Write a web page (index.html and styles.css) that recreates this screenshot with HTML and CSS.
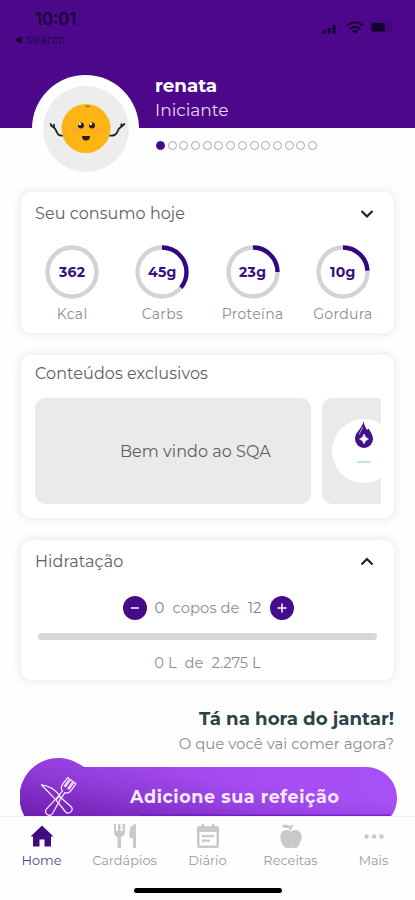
FILE: index.html
```html
<!DOCTYPE html>
<html lang="pt-BR">
<head>
<meta charset="utf-8">
<meta name="viewport" content="width=device-width, initial-scale=1">
<title>Home</title>
<link rel="stylesheet" href="styles.css">
</head>
<body>
<div class="app">
  <header class="header">
    <div class="status">
      <div class="status-left">
        <div class="clock">10:01</div>
        <div class="back"><svg width="8" height="8" viewBox="0 0 8 8"><path d="M0 4 7.500.5v7z"/></svg><span>Search</span></div>
      </div>
      <svg class="status-icons" width="76" height="16" viewBox="0 0 76 16">
        <path d="M-8.500 10h3v3.500h-3zM-3.500 8h3v5.500h-3zM1.500 5h3v8.500h-3z"/>
        <path d="M6.500 2.500h3v11h-3z" opacity=".08"/>
        <path d="M16 5.500q8-6.500 16 0M19 9q5-4 10 0" fill="none" stroke="#12032d" stroke-width="2"/>
        <path d="M21 11q3-2 6 0l-3 2.500z"/>
        <rect x="39" y="1" width="22" height="12" rx="3.500" opacity=".12"/>
        <rect x="40.500" y="3" width="13.500" height="8.500" rx="1.500"/>
        <path d="M63 5q2 2 0 4z" opacity=".2"/>
      </svg>
    </div>
    <div class="profile">
      <div class="avatar">
        <svg width="86" height="86" viewBox="0 0 86 86">
          <circle cx="43" cy="43" r="43" fill="#ededee"/>
          <g fill="none" stroke="#222" stroke-width="1.700" stroke-linecap="round" stroke-linejoin="round">
            <path d="M20 49.500q-5 .5-6-3l-2-4-4-3M9.500 40.500 7.500 38M11 41V38.500M66 49.500q6 1 8-3l2-4 4-3M78 41l.5-3M79 40l2.500-2"/>
          </g>
          <circle cx="43" cy="42.500" r="24.500" fill="#fdb515"/>
          <path d="M24 28a24.500 24.500 0 0 0 11 37.500Q22 49 24 28z" fill="#f3a51b" opacity=".35"/>
          <path d="M42.500 20.500h4" stroke="#a66c15" stroke-width="1.500"/>
          <ellipse cx="32.500" cy="45" rx="4" ry="2.500" fill="#ff9b50" opacity=".6"/>
          <ellipse cx="55" cy="45" rx="4" ry="2.500" fill="#ff9b50" opacity=".6"/>
          <circle cx="38" cy="39.500" r="3" fill="#322014"/><circle cx="49" cy="39.500" r="3" fill="#322014"/>
          <circle cx="36.800" cy="38" r="1.300" fill="#fff"/><circle cx="47.800" cy="38" r="1.300" fill="#fff"/>
          <path d="M39 50h8q0 4.500-4 4.500T39 50z" fill="#3c1714"/>
        </svg>
      </div>
      <div class="who">
        <div class="name">renata</div>
        <div class="level">Iniciante</div>
        <div class="dots"><i class="on"></i><i></i><i></i><i></i><i></i><i></i><i></i><i></i><i></i><i></i><i></i><i></i><i></i><i></i></div>
      </div>
    </div>
  </header>

  <main class="main">
    <section class="card intake">
      <div class="card-head"><h2>Seu consumo hoje</h2>
        <svg width="14" height="10" viewBox="0 0 14 10"><path d="M1.500 2 7 7.500 12.500 2"/></svg></div>
      <div class="rings">
        <div class="ring"><div class="dial"><svg viewBox="0 0 54 54"><circle cx="27" cy="27" r="24.500"/></svg><b>362</b></div><span>Kcal</span></div>
        <div class="ring"><div class="dial"><svg viewBox="0 0 54 54"><circle cx="27" cy="27" r="24.500"/><circle class="arc" cx="27" cy="27" r="24.500" pathLength="100" stroke-dasharray="36 100"/></svg><b>45g</b></div><span>Carbs</span></div>
        <div class="ring"><div class="dial"><svg viewBox="0 0 54 54"><circle cx="27" cy="27" r="24.500"/><circle class="arc" cx="27" cy="27" r="24.500" pathLength="100" stroke-dasharray="25 100"/></svg><b>23g</b></div><span>Proteína</span></div>
        <div class="ring"><div class="dial"><svg viewBox="0 0 54 54"><circle cx="27" cy="27" r="24.500"/><circle class="arc" cx="27" cy="27" r="24.500" pathLength="100" stroke-dasharray="24 100"/></svg><b>10g</b></div><span>Gordura</span></div>
      </div>
    </section>

    <section class="card content">
      <div class="card-head"><h2>Conteúdos exclusivos</h2></div>
      <div class="carousel">
        <div class="slide">Bem vindo ao SQA</div>
        <div class="slide next">
          <div class="disc">
            <svg width="18" height="27" viewBox="0 0 18 27"><path d="M8.500 0c.5 4 2 6 3.500 9l1.500-1.500C15.500 11 18 14 18 18a9 9 0 0 1-18 0c0-3.500 1.500-6 4-9C6 6.500 8 4 8.500 0z" fill="#43108c"/><path d="M7.500 6c0 3-3 4-3 7.500" fill="none" stroke="#bca4dc" stroke-width="1"/><path d="M9 13q1 4 4.500 5-3.500 1-4.500 5-1-4-4.500-5 3.500-1 4.500-5z" fill="#fff" stroke="#fff" stroke-width=".6"/></svg>
            <div class="tagline"></div>
          </div>
        </div>
      </div>
    </section>

    <section class="card water">
      <div class="card-head"><h2>Hidratação</h2>
        <svg width="14" height="10" viewBox="0 0 14 10"><path d="M1.500 7.500 7 2l5.500 5.500"/></svg></div>
      <div class="stepper">
        <button aria-label="Menos"><svg width="24" height="24" viewBox="0 0 24 24"><path d="M8 12h8"/></svg></button>
        <p><em>0</em> <span>copos de</span> <em>12</em></p>
        <button aria-label="Mais"><svg width="24" height="24" viewBox="0 0 24 24"><path d="M7.500 12h9M12 7.500v9"/></svg></button>
      </div>
      <div class="bar"></div>
      <p class="litres"><span>0 L</span><span>de</span><span>2.275 L</span></p>
    </section>

    <section class="meal">
      <h3>Tá na hora do jantar!</h3>
      <p>O que você vai comer agora?</p>
      <div class="cta">
        <svg width="377" height="58" viewBox="0 0 377 58">
          <defs>
            <linearGradient id="body" x1="0" y1="0" x2="1" y2="0"><stop offset="0" stop-color="#953edd"/><stop offset=".6" stop-color="#a54df2"/><stop offset="1" stop-color="#a750f6"/></linearGradient>
            <linearGradient id="shade" gradientUnits="userSpaceOnUse" x1="60" y1="2" x2="52" y2="62"><stop offset="0" stop-color="#5d109d" stop-opacity="0"/><stop offset=".35" stop-color="#5d109d" stop-opacity=".15"/><stop offset="1" stop-color="#5d109d" stop-opacity=".68"/></linearGradient>
            <linearGradient id="edge" x1="0" y1="0" x2="0" y2="1"><stop offset="0" stop-color="#6a0fc4" stop-opacity="0"/><stop offset="1" stop-color="#6a0fc4" stop-opacity=".85"/></linearGradient>
          </defs>
          <path d="M38.500 0C49 0 56 4 64 9H346A31 31 0 0 1 370.500 59H5A39 39 0 0 1 38.500 0z" fill="url(#body)"/>
          <path d="M38.500 0C49 0 56 4 64 9H346A31 31 0 0 1 370.500 59H5A39 39 0 0 1 38.500 0z" fill="url(#shade)"/>
          <path d="M120 55.500H368L371 58H120z" fill="url(#edge)"/>
          <g fill="none" stroke="#f7eaff" stroke-width="1.300" stroke-linejoin="round" stroke-linecap="round">
            <g transform="translate(37 39.500) rotate(-44) scale(.95)"><path d="M-2.500-21Q5-12 3.500 1H-2.500zM-2.500 1 2.500 1 4 17Q4 21 0 21T-4 17z"/></g>
            <g transform="translate(39.500 39.500) rotate(36) scale(.95)"><path d="M-5.500-22v9q0 4.500 4 5.500L-2 2-4 18q0 4 4 4t4-4L2 2 1.500-7.500q4-1 4-5.500v-9M-3-22v9h1.500v-9h3v9H3v-9M-5.500-22H-3M3-22H5.500"/></g>
          </g>
        </svg>
        <span>Adicione sua refeição</span>
      </div>
    </section>
  </main>

  <nav class="tabs">
    <a class="tab active"><svg width="24" height="24" viewBox="0 0 24 24"><path d="M12 1.500.5 12.500H3v10h6.500v-7h5v7H21v-10h2.500z"/></svg><span>Home</span></a>
    <a class="tab"><svg width="26" height="26" viewBox="0 0 26 26"><path d="M2 1h2v7h2V1h2.500v7h2V1h2.500v8q0 4-4 5v11H5.500V14Q2 13 2 9zM24 1v24h-3V15h-3.500V8q0-6 6.500-7z"/></svg><span>Cardápios</span></a>
    <a class="tab"><svg width="24" height="26" viewBox="0 0 24 26"><path fill-rule="evenodd" d="M3 3h2.500V1H8v2h8V1h2.500v2H21q2 0 2 2v18q0 2-2 2H3q-2 0-2-2V5q0-2 2-2zm.5 6v13.500h17V9zM6 12h12v2.200H6zm0 4.500h8v2.200H6z"/></svg><span>Diário</span></a>
    <a class="tab"><svg width="24" height="26" viewBox="0 0 24 26"><path d="M12 8.500C9 6.500 5 6.500 3 9 0 12 1.500 19 4.500 23c2 3 5 2.500 7.500 1.500 2.500 1 5.500 1.500 7.500-1.500C22.500 19 24 12 21 9 19 6.500 15 6.500 12 8.500zM11 7C10 4.500 8 5.500 3.500 4.500L3 2C7 1.500 10 1.500 11.500 3.500L13 1.500l1.500 1q-2 2-2 4.500z"/></svg><span>Receitas</span></a>
    <a class="tab"><svg width="24" height="26" viewBox="0 0 24 26"><circle cx="4.500" cy="13.500" r="2.200"/><circle cx="12" cy="13.500" r="2.200"/><circle cx="19.500" cy="13.500" r="2.200"/></svg><span>Mais</span></a>
    <div class="home-bar"></div>
  </nav>
</div>
</body>
</html>
```
FILE: styles.css
```css
* { box-sizing: border-box; }
body { margin: 0; background: #fff; font-family: Montserrat, Inter, sans-serif; color: #606060; }
h2, h3, p { margin: 0; font-weight: 400; }
svg { display: block; }
.app { width: 415px; height: 900px; display: flex; flex-direction: column; overflow: hidden; background: #fefefe; }

.header { flex: none; height: 182px; background: linear-gradient(#4d078a 0 128px, transparent 128px); }
.status { height: 75px; display: flex; justify-content: space-between; padding: 10px 17px 0 14px; color: #12032d; fill: #12032d; font-family: Inter, sans-serif; }
.clock { padding-left: 21px; font-size: 17px; font-weight: 500; line-height: 19px; }
.back { display: flex; align-items: center; gap: 4px; margin-top: 4px; font-size: 11px; line-height: 14px; letter-spacing: .5px; }
.back span { opacity: .7; }
.status-icons { margin: 10px -9px 0 0; overflow: visible; }
.profile { display: flex; padding-left: 32px; }
.avatar { width: 107px; height: 107px; border-radius: 50%; background: #fefefe; display: grid; place-items: center; }
.who { padding-left: 16px; color: #fff; }
.name { font-size: 18.300px; font-weight: 700; line-height: 22px; }
.level { margin-top: 2px; font-size: 17px; line-height: 22px; color: #e5d9f1; }
.dots { display: flex; gap: 2.700px; margin-top: 19.500px; padding-left: 1px; }
.dots i { width: 9px; height: 9px; border: 1px solid #aaa3bd; border-radius: 50%; }
.dots .on { background: #3d0a91; border-color: #3d0a91; }

.main { flex: 1; min-height: 0; overflow: hidden; display: flex; flex-direction: column; padding: 10px 21px 0; }
.card { flex: none; background: #fff; border-radius: 10px; box-shadow: 0 0 9px 2px rgba(0,0,0,.075); padding: 0 14px; }
.intake { height: 141px; margin-bottom: 22px; }
.content { height: 163px; margin-bottom: 22px; }
.water { height: 140px; }
.card-head { display: flex; align-items: center; justify-content: space-between; height: 44px; padding-right: 6px; }
.card-head h2 { font-size: 16px; line-height: 20px; letter-spacing: .08px; }
.card-head path { fill: none; stroke: #222; stroke-width: 2.200; }
.rings { display: flex; margin: 9px -8px 0; }
.ring { flex: 1; text-align: center; font-size: 14px; line-height: 18px; color: #8d8d8d; letter-spacing: .3px; }
.ring > span { display: block; margin-top: 6px; }
.dial { display: grid; width: 54px; height: 54px; margin: 0 auto; place-items: center; }
.dial > * { grid-area: 1 / 1; }
.dial svg { width: 54px; height: 54px; transform: rotate(-90deg); }
.dial circle { fill: none; stroke: #d3d3d3; stroke-width: 4.300; }
.dial .arc { stroke: #330780; }
.dial b { color: #38117e; font-size: 14px; font-weight: 700; }

.content .card-head { height: 37px; }
.carousel { display: flex; gap: 11px; margin-top: 6px; overflow: hidden; width: 346px; }
.slide { flex: none; width: 276px; height: 106px; border-radius: 10px; background: #eaeaea; display: grid; align-items: center; justify-items: start; padding-left: 85px; font-size: 16px; letter-spacing: .05px; }
.slide.next { padding: 0 0 0 10px; }
.disc { width: 64px; height: 64px; border-radius: 50%; background: #fff; display: flex; flex-direction: column; align-items: center; padding-top: 2px; }
.tagline { width: 14px; height: 2px; margin-top: 13px; background: #c5e4da; }

.stepper { display: flex; justify-content: center; align-items: center; gap: 8px; height: 24px; margin: 12px -1px 0 0; font-size: 14.800px; color: #8d8d8d; }
.stepper button { width: 24px; height: 24px; padding: 0; border: 0; border-radius: 50%; background: #460b8b; }
.stepper path { fill: none; stroke: #fff; stroke-width: 1.500; }
.stepper p { display: flex; width: 107px; justify-content: space-between; }
.stepper em { font-style: normal; color: #8575aa; }
.bar { height: 7px; margin: 13px 3px 0; border-radius: 4px; background: #d7d7d7; }
.litres { display: flex; justify-content: center; gap: 8px; margin-top: 13px; font-size: 14.700px; line-height: 20px; color: #8d8d8d; }

.meal { flex: none; margin-top: 28px; text-align: right; }
.meal h3 { font-size: 18.200px; font-weight: 700; line-height: 22px; color: #294347; }
.meal p { margin-top: 4px; font-size: 14.950px; line-height: 20px; color: #8b8b8b; }
.cta { display: grid; width: 377px; margin: 4px 0 0 -1px; }
.cta > * { grid-area: 1 / 1; }
.cta span { padding-left: 110px; align-self: start; margin-top: 27px; text-align: left; font-size: 17.500px; font-weight: 700; line-height: 23px; letter-spacing: .6px; color: #f8eaff; }

.tabs { flex: none; height: 84px; display: grid; grid-template-columns: repeat(5, 1fr); grid-template-rows: 71px 5px; background: #fefefe; border-top: 1px solid #f0f0f0; }
.tab { display: flex; flex-direction: column; align-items: center; padding-top: 6px; font-size: 12.900px; color: #9a9a9a; fill: #c9c9c9; }
.tab svg { height: 26px; }
.tab span { margin-top: 4px; line-height: 16px; }
.tab.active { color: #544080; fill: #420b82; }
.home-bar { grid-column: 1 / -1; justify-self: center; width: 148px; height: 5px; border-radius: 3px; background: #000; }
```
